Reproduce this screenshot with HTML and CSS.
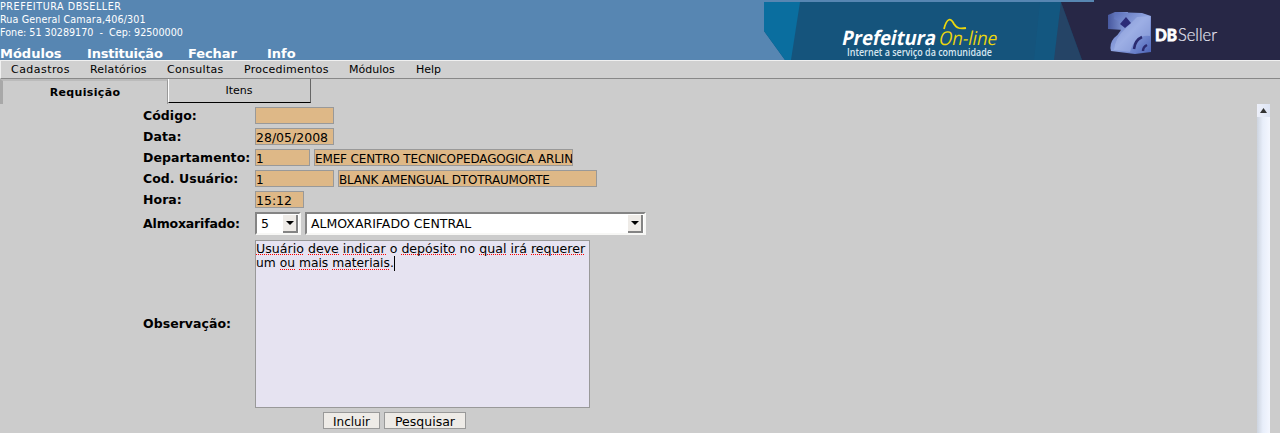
FILE: index.html
```html
<!DOCTYPE html>
<html lang="pt-BR">
<head>
<meta charset="utf-8">
<title>DBSeller - Requisição</title>
<link rel="stylesheet" href="styles.css">
</head>
<body>
<header class="header">
  <div class="info">
    <div class="address">
      <div class="org">PREFEITURA DBSELLER</div>
      <div class="street">Rua General Camara,406/301</div>
      <div class="phone">Fone: 51 30289170&nbsp; -&nbsp; Cep: 92500000</div>
    </div>
    <nav class="main-nav"><a class="n1">Módulos</a><a class="n2">Instituição</a><a class="n3">Fechar</a><a class="n4">Info</a></nav>
  </div>
  <svg class="banner" width="516" height="60" viewBox="0 0 516 60">
    <defs>
      <linearGradient id="cube" x1="0" y1="0" x2="1" y2="1">
        <stop offset="0" stop-color="#5468b4"/><stop offset=".5" stop-color="#90a4e0"/><stop offset="1" stop-color="#4a62b6"/>
      </linearGradient>
      <linearGradient id="face" x1="0" y1="0" x2="1" y2="0">
        <stop offset="0" stop-color="#47589f"/><stop offset="1" stop-color="#8fa5e0"/>
      </linearGradient>
    </defs>
    <path fill="#15547c" d="M0 2H330V60H21L0 31z"/>
    <path fill="#0a6e9f" d="M0 2H36L27 60H21L0 31z"/>
    <path fill="#115b85" d="M276 2H297L290 60H270z" opacity=".45"/>
    <path fill="#254466" d="M297 2L318 60H290z"/>
    <path fill="#272746" d="M297 2H330V0H516V60H318z"/>
    <text class="brand" transform="translate(77 45) skewX(-12)" textLength="94" lengthAdjust="spacingAndGlyphs">Prefeitura</text>
    <text class="online" transform="translate(174 45) skewX(-12)" textLength="58" lengthAdjust="spacingAndGlyphs">On-line</text>
    <path d="M180 29C183 17 187 18 190 24C193 29 197 29 202 28" fill="none" stroke="#ecd70c" stroke-width="1.8"/>
    <text class="slogan" x="83" y="56" textLength="145" lengthAdjust="spacingAndGlyphs">Internet a serviço da comunidade</text>
    <path fill="url(#face)" d="M344 15L351 12L364 12L360 30L344 29z"/>
    <path fill="url(#cube)" d="M351 12L378 13L387 16V52L371 54L347 51Q345 44 350 38Q358 32 359 23L350 19z"/>
    <path fill="#a9b9ea" opacity=".5" d="M373 17L386 16V36Q371 34 366 52L350 50Q351 38 362 28z"/>
    <path fill="#2b2b78" d="M362 17L367 23L361 28L356 24z"/>
    <path fill="none" stroke="#2b2b70" stroke-width="2.5" d="M370 49Q371 40 378 37M379 51Q379 47 383 45"/>
    <text class="db" x="391" y="41" textLength="22" lengthAdjust="spacingAndGlyphs">DB</text>
    <text class="seller" x="414" y="41" textLength="39" lengthAdjust="spacingAndGlyphs">Seller</text>
  </svg>
</header>
<nav class="menu"><a class="m1">Cadastros</a><a class="m2">Relatórios</a><a class="m3">Consultas</a><a class="m4">Procedimentos</a><a class="m5">Módulos</a><a class="m6">Help</a></nav>
<div class="tabs"><div class="tab active">Requisição</div><div class="tab">Itens</div></div>
<main class="content">
  <form class="form">
    <div class="row"><span class="label">Código:</span><span class="field w79"></span></div>
    <div class="row"><span class="label">Data:</span><span class="field w79 date">28/05/2008</span></div>
    <div class="row"><span class="label">Departamento:</span><span class="field w55">1</span><span class="field w259 dept">EMEF CENTRO TECNICOPEDAGOGICA ARLIN</span></div>
    <div class="row"><span class="label">Cod. Usuário:</span><span class="field w79">1</span><span class="field w259">BLANK AMENGUAL DTOTRAUMORTE</span></div>
    <div class="row"><span class="label">Hora:</span><span class="field w49 date">15:12</span></div>
    <div class="row tall"><span class="label">Almoxarifado:</span>
      <span class="select small"><span>5</span><i class="arrow"><svg width="8" height="4"><path d="M0 0H8L4 4z"/></svg></i></span>
      <span class="select big"><span>ALMOXARIFADO CENTRAL</span><i class="arrow"><svg width="8" height="4"><path d="M0 0H8L4 4z"/></svg></i></span></div>
    <div class="row notes"><span class="label">Observação:</span>
      <div class="area"><div class="line first"><u>Usuário</u> <u>deve</u> <u>indicar</u> o <u>depósito</u> no <u>qual</u> <u>irá</u> <u>requerer</u></div><div class="line">um <u>ou</u> <u>mais</u> <u>materiais</u>.<b class="caret"></b></div></div></div>
    <div class="actions"><span class="btn b1">Incluir</span><span class="btn b2">Pesquisar</span></div>
  </form>
  <div class="scroll"><div class="scroll-up"><svg width="7" height="5"><path d="M3.5 0L7 5H0z" fill="#333"/></svg></div></div>
</main>
</body>
</html>
```
FILE: styles.css
```css
* { box-sizing: border-box; }
body { margin: 0; height: 433px; overflow: hidden; background: #ccc; color: #000; font-family: "DejaVu Sans", sans-serif; font-size: 12px; white-space: nowrap; }
.header { display: flex; justify-content: space-between; height: 60px; background: #5786b2; color: #fff; overflow: hidden; }
.address { font-size: 9.6px; line-height: 13px; height: 46px; }
.org { letter-spacing: .55px; }
.street { letter-spacing: .12px; }
.main-nav { display: flex; font-size: 13px; font-weight: bold; line-height: 15px; }
.n1 { width: 87px; }
.n2 { width: 101px; letter-spacing: -.2px; }
.n3 { width: 79px; letter-spacing: -.1px; }
.banner { display: block; flex: none; }
.brand { font: bold 20px "Open Sans", sans-serif; fill: #fff; }
.online { font: 19px "Open Sans", sans-serif; fill: #ecd70c; }
.slogan { font: 600 10px "Open Sans", sans-serif; fill: #d7e6f0; }
.db { font: bold 17px Lato, sans-serif; fill: #fff; stroke: #fff; stroke-width: .9px; }
.seller { font: 300 17px Lato, sans-serif; fill: #e4e4f0; stroke: #e4e4f0; stroke-width: .2px; }
.menu { display: flex; height: 19px; padding-left: 10px; background: #d0d0d0; border: solid #f0f0f0; border-width: 1px 0 0 1px; border-bottom: 1px solid #888; font-size: 11px; line-height: 17px; }
.m1 { width: 79px; letter-spacing: .45px; }
.m2 { width: 77px; letter-spacing: .2px; }
.m3 { width: 77px; letter-spacing: .3px; }
.m4 { width: 105px; letter-spacing: .25px; }
.m5 { width: 67px; }
.tabs { display: flex; height: 25px; font-size: 11px; text-align: center; }
.tab { width: 143px; height: 24px; line-height: 24px; padding-right: 1px; border-left: 1px solid #fff; border-right: 1px solid #666; border-bottom: 1px solid #000; }
.tab.active { width: 168px; height: 25px; line-height: 24px; font-weight: bold; letter-spacing: .35px; padding: 0; border: 0; border-left: 3px solid #a8a8a8; border-top: 2px solid #bbb; border-right: 1px solid #999; }
.content { display: flex; justify-content: space-between; height: 329px; padding-right: 10px; }
.form { margin: 3px 0 0 143px; width: 520px; }
.row { display: flex; align-items: flex-start; gap: 4px; height: 21px; }
.label { width: 108px; flex: none; font-size: 12.5px; font-weight: bold; line-height: 18px; letter-spacing: .04px; }
.field { height: 17px; flex: none; border: 1px solid #999; background: #deb887; line-height: 18px; overflow: hidden; }
.date { font-size: 12.5px; }
.w79 { width: 79px; }
.w55 { width: 55px; }
.w49 { width: 49px; }
.w259 { width: 259px; letter-spacing: -.21px; }
.w259.dept { letter-spacing: -.15px; }
.row.tall { height: 28px; }
.tall .label { line-height: 24px; letter-spacing: -.16px; }
.select { display: flex; justify-content: space-between; height: 23px; padding: 0 1px 0 4px; background: #fff; border: 2px solid #f7f7f5; border-top-color: #848484; border-left-color: #848484; font-size: 12.5px; line-height: 19px; }
.small { width: 46px; }
.big { width: 341px; }
.arrow { display: flex; align-items: center; justify-content: center; width: 15px; height: 18px; margin-top: 1px; background: #eeebe7; border: solid #848484; border-width: 0 2px 2px 0; }
.row.notes { height: 172px; }
.notes .label { line-height: 168px; }
.area { width: 335px; height: 168px; border: 1px solid #999; background: #e6e3f1; }
.line { height: 15px; line-height: 15px; font-size: 12.3px; }
.line.first { font-size: 12.6px; }
.line u { text-decoration: none; background: repeating-linear-gradient(90deg, #f00 0 1px, transparent 1px 2px) 0 13px / 100% 1px no-repeat; }
.caret { display: inline-block; width: 1px; height: 15px; background: #000; vertical-align: top; }
.actions { display: flex; gap: 4px; padding-left: 180px; }
.btn { height: 17px; border: 1px solid #999; background: #eeebe7; text-align: center; line-height: 18px; }
.b1 { width: 57px; }
.b2 { width: 82px; font-size: 12.5px; }
.scroll { width: 13px; background: linear-gradient(90deg, #cdd4df, #e8eefa 45%, #f4f7ff); }
.scroll-up { display: flex; align-items: center; justify-content: center; height: 13px; background: linear-gradient(90deg, #edf0fa, #dde4f4); }
```
